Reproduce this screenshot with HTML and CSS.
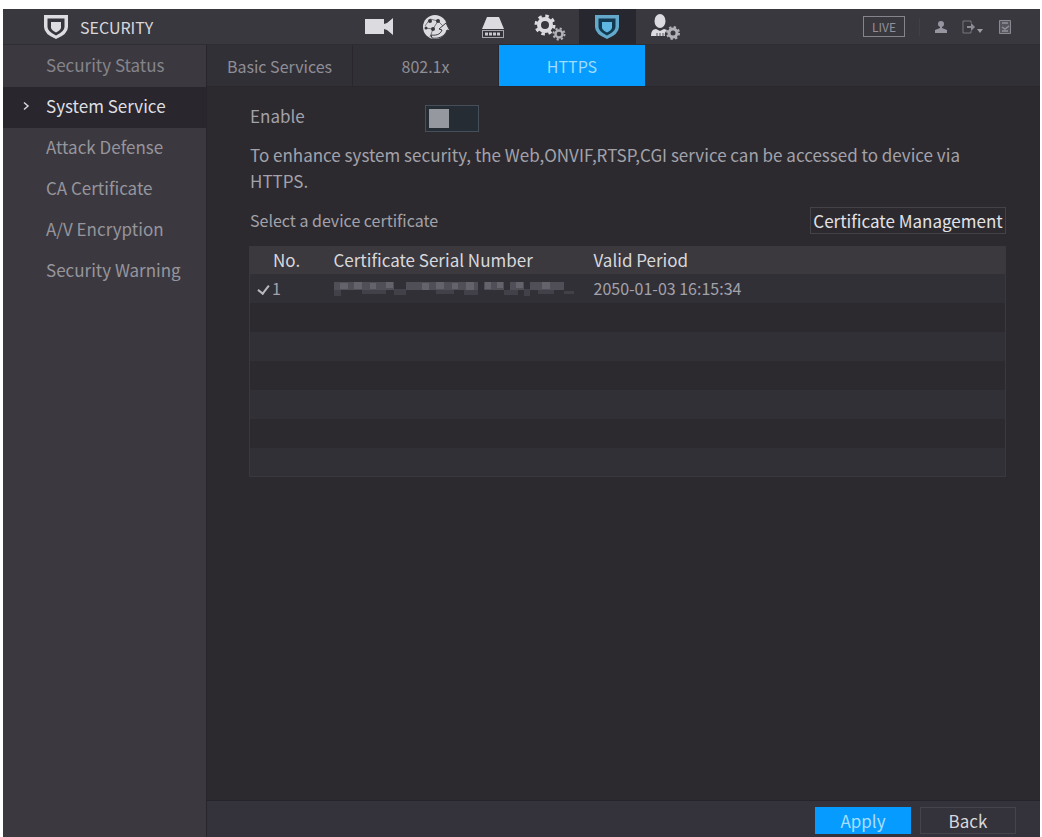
FILE: index.html
```html
<!DOCTYPE html>
<html lang="en">
<head>
<meta charset="utf-8">
<title>Security - System Service</title>
<link rel="stylesheet" href="styles.css">
</head>
<body>
<div class="app">
  <header class="topbar">
    <div class="brand">
      <svg width="26" height="26" viewBox="0 0 26 26" aria-hidden="true">
        <path d="M1 1h24v12q0 7-12 12Q1 20 1 13z" fill="#dddde1"/>
        <path d="M4.500 4.500h17v8.500q0 4.500-8.500 8.500-8.500-4-8.500-8.500z" fill="#36343c"/>
        <path d="M8 8h10v5.500q0 2.500-5 5-5-2.500-5-5z" fill="#dddde1"/>
      </svg>
      <span>SECURITY</span>
    </div>
    <nav class="modules" aria-label="Modules">
      <a href="#camera" aria-label="Camera"><svg width="30" height="26" viewBox="0 0 30 26"><path d="M1 5h19v5l3-1 6-5v17l-6-5-3-1v5H1z" fill="#dcdce0"/></svg></a>
      <a href="#network" aria-label="Network"><svg width="30" height="28" viewBox="0 0 30 28">
        <circle cx="14" cy="14" r="12" fill="#dcdce0"/>
        <g fill="none" stroke="#77757c" stroke-width="1"><path d="M9 6l8 2 5 5M4 13l5-7M4 15l8 1 5-8M12 16l-3 8"/></g>
        <g fill="#3a383f"><circle cx="9" cy="8" r="2"/><circle cx="17" cy="8" r="2"/><circle cx="5" cy="15" r="1.500"/><circle cx="12" cy="16" r="2"/></g>
        <path d="M10 22c7 1 10-2 11-5l-3-1 7-6 4 8-3-1c-2 7-9 9-15 8z" fill="#dcdce0" stroke="#3a383f"/></svg></a>
      <a href="#storage" aria-label="Storage"><svg width="26" height="26" viewBox="0 0 26 26"><path d="M7 3h12l5 12H2z" fill="#dcdce0"/><path d="M2 16h22v8H2z" fill="#a6a6ac"/><path d="M3 17h20v6H3z" fill="#333139"/><path d="M5 20h16" stroke="#c6c6cb" stroke-width="3" stroke-dasharray="3 1"/></svg></a>
      <a href="#system" aria-label="System"><svg width="32" height="28" viewBox="0 0 32 28"><g fill="none" stroke="#dcdce0"><circle cx="11" cy="12" r="6" stroke-width="4"/><circle cx="11" cy="12" r="9" stroke-width="3" stroke-dasharray="3.500 3.570"/><circle cx="25" cy="21" r="3.500" stroke-width="2.500" stroke="#b2b2b8"/><circle cx="25" cy="21" r="5.500" stroke-width="2" stroke-dasharray="2.160 2.160" stroke="#b2b2b8"/></g></svg></a>
      <a href="#security" aria-label="Security" class="current" aria-current="page"><svg width="26" height="26" viewBox="0 0 26 26"><path d="M1 1h24v12q0 7-12 12Q1 20 1 13z" fill="#62a9cc"/><path d="M4.500 4.500h17v8.500q0 4.500-8.500 8.500-8.500-4-8.500-8.500z" fill="#123950"/><path d="M8 8h10v5.500q0 2.500-5 5-5-2.500-5-5z" fill="#5fb6e0"/></svg></a>
      <a href="#account" aria-label="Account"><svg width="32" height="28" viewBox="0 0 32 28"><ellipse cx="12" cy="8" rx="5.500" ry="7" fill="#dcdce0"/><path d="M3 23q0-7 5-7l4 2 4-2 3 1q-3 3-2 6z" fill="#dcdce0"/><path d="M9 20v3m3-3v3m3-3v3" stroke="#55535a"/><g fill="none" stroke="#b2b2b8"><circle cx="25" cy="20" r="4" stroke-width="3"/><circle cx="25" cy="20" r="6" stroke-width="2" stroke-dasharray="2.350 2.360"/></g></svg></a>
    </nav>
    <div class="tools">
      <button class="live" type="button">LIVE</button>
      <span class="divider"></span>
      <button class="tool" type="button" aria-label="User"><svg width="14" height="16" viewBox="0 0 14 16"><circle cx="7" cy="5" r="3" fill="#9796a0"/><path d="M6 7h2v2l5 2v3H1v-3l5-2z" fill="#9796a0"/></svg></button>
      <button class="tool" type="button" aria-label="Log out"><svg width="22" height="16" viewBox="0 0 22 16"><path d="M9 4V2H1v12h8v-2" fill="none" stroke="#77767f"/><path d="M5 7h4V4l4 4-4 4V9H5z" fill="#8d8c95"/><path d="M15 10h6l-3 4z" fill="#9c9ba3"/></svg></button>
      <button class="tool" type="button" aria-label="QR code"><svg width="14" height="16" viewBox="0 0 14 16"><path d="M1.500 1.500h11v13h-11z" fill="#57565f" stroke="#8a8992"/><path d="M4 4h6M4 8l3 2 4-3M4 12h6" fill="none" stroke="#92919a" stroke-width="1.500"/></svg></button>
    </div>
  </header>
  <div class="body">
    <nav class="sidebar" aria-label="Security">
      <a href="#status" class="first">Security Status</a>
      <a href="#service" class="active" aria-current="page"><svg class="caret" width="7" height="10" viewBox="0 0 7 10"><path d="M1 1.500L5 5 1 8.500" fill="none" stroke="#d5d5da" stroke-width="1.500"/></svg>System Service</a>
      <a href="#attack">Attack Defense</a>
      <a href="#ca">CA Certificate</a>
      <a href="#av">A/V Encryption</a>
      <a href="#warning">Security Warning</a>
    </nav>
    <div class="content">
      <nav class="tabs" aria-label="System Service">
        <a href="#basic">Basic Services</a>
        <a href="#8021x">802.1x</a>
        <a href="#https" class="selected" aria-current="page">HTTPS</a>
      </nav>
      <main class="panel">
        <div class="enable-row">
          <label for="enable">Enable</label>
          <input id="enable" class="switch" type="checkbox" role="switch">
        </div>
        <p class="hint">To enhance system security, the Web,ONVIF,RTSP,CGI service can be accessed to device via HTTPS.</p>
        <div class="cert-row">
          <span id="cert-label">Select a device certificate</span>
          <button class="outline" type="button">Certificate Management</button>
        </div>
        <table class="certs" aria-labelledby="cert-label">
          <colgroup><col class="col-no"><col class="col-serial"><col></colgroup>
          <thead><tr><th>No.</th><th>Certificate Serial Number</th><th>Valid Period</th></tr></thead>
          <tbody>
            <tr><td><label class="pick"><input type="checkbox" checked><span>1</span></label></td>
              <td><svg class="mask" width="240" height="18" viewBox="0 0 240 18" role="img" aria-label="Hidden serial number">
                <path d="M0 3h60v8H0zM72 3h72v8H72zM150 3h20v8h-20zM176 3h14v8h-14zM196 3h34v8h-34z" fill="#504f58"/>
                <path d="M6 4h8v6H6zM20 3h8v7h-8zM36 4h6v6h-6zM52 3h7v6h-7zM88 4h7v7h-7zM102 3h8v7h-8zM118 4h6v6h-6zM132 3h8v8h-8zM151 3h6v7h-6zM163 3h6v6h-6zM182 3h7v6h-7zM208 3h8v7h-8z" fill="#64636c"/>
                <path d="M0 11h7v6H0zM28 11h24v4H28zM60 10h12v6H60zM102 11h18v4h-18zM130 11h14v5h-14zM170 11h14v5h-14zM190 10h6v7h-6zM204 11h16v4h-16zM230 12h10v3h-10z" fill="#42414a"/>
              </svg></td><td>2050-01-03 16:15:34</td></tr>
            <tr><td></td><td></td><td></td></tr>
            <tr><td></td><td></td><td></td></tr>
            <tr><td></td><td></td><td></td></tr>
            <tr><td></td><td></td><td></td></tr>
            <tr><td></td><td></td><td></td></tr>
            <tr><td></td><td></td><td></td></tr>
          </tbody>
        </table>
      </main>
      <footer class="actions">
        <button class="primary" type="button">Apply</button>
        <button class="secondary" type="button">Back</button>
      </footer>
    </div>
  </div>
</div>
</body>
</html>
```
FILE: styles.css
```css
* { box-sizing: border-box; }
body {
  margin: 0;
  padding: 9px 2px 0 3px;
  background: #fff;
  color: #a3a2aa;
  font: 16px/24px "Noto Sans CJK SC", "Noto Sans", sans-serif;
}
a { color: inherit; text-decoration: none; }
button { font: inherit; color: inherit; padding: 0; background: none; border: 0; cursor: pointer; }
svg { display: block; }

.app {
  display: flex;
  flex-direction: column;
  min-height: calc(100vh - 9px);
  background: #2c2a2f;
}
.topbar {
  display: grid;
  grid-template-columns: 1fr auto 1fr;
  height: 36px;
  background: #3a383f;
  border-bottom: 1px solid #2f2d34;
}
.brand {
  display: flex;
  align-items: center;
  gap: 11px;
  padding-left: 40px;
  color: #d8d8dc;
}
.modules { display: grid; grid-template-columns: repeat(6, 57px); }
.modules a { display: grid; place-items: center; }
.modules .current { background: #27282f; }
.tools {
  display: flex;
  justify-content: flex-end;
  align-items: center;
  gap: 14px;
  padding-right: 28px;
}
.live {
  width: 42px;
  height: 21px;
  border: 1px solid #85848d;
  color: #92919a;
  font-size: 12px;
  line-height: 18px;
}
.divider { width: 1px; height: 18px; background: #424047; }

.body { display: flex; flex: 1; }
.sidebar {
  flex: 0 0 204px;
  background: #3b393f;
  border-right: 1px solid #28262c;
  color: #96959d;
  font-size: 17px;
}
.sidebar a {
  position: relative;
  display: flex;
  align-items: center;
  height: 41px;
  padding: 0 0 4px 43px;
}
.sidebar .first { height: 42px; padding-bottom: 2px; color: #85848b; }
.sidebar .active { background: #29272d; color: #dfdfe3; }
.caret { position: absolute; left: 20px; }

.content { display: flex; flex: 1; flex-direction: column; min-width: 0; }
.tabs {
  display: grid;
  grid-template-columns: repeat(3, 146px);
  height: 42px;
  background: #323037;
  border-bottom: 1px solid #29272c;
  color: #8f8e96;
}
.tabs a { display: grid; place-items: center; border-right: 1px solid #29272d; }
.tabs .selected { background: #069bff; color: #9fdcff; border: 0; }

.panel { flex: 1; padding: 14px 34px 24px 43px; }
.enable-row { display: flex; align-items: center; height: 34px; }
.enable-row label { width: 175px; padding-bottom: 4px; font-size: 17px; }
.switch {
  appearance: none;
  display: flex;
  width: 54px;
  height: 27px;
  margin: 0;
  padding: 3px;
  border: 1px solid #454f59;
  background: #252c33;
}
.switch::before { content: ""; width: 20px; background: #96989f; }
.switch:checked { justify-content: flex-end; background: #069bff; }
.hint { max-width: 720px; margin: 7px 0 0; font-size: 17px; line-height: 26px; }
.cert-row {
  display: flex;
  align-items: center;
  justify-content: space-between;
  margin: 13px 0 12px;
}
.cert-row span { padding-bottom: 2px; }
.outline {
  width: 196px;
  height: 27px;
  border: 1px solid #424248;
  color: #e2e2e6;
  font-size: 17px;
}

.certs {
  width: calc(100% + 1px);
  margin-left: -1px;
  table-layout: fixed;
  border-collapse: collapse;
  border: 1px solid #3a383f;
}
.col-no { width: 84px; }
.col-serial { width: 260px; }
.certs th, .certs td { padding: 0; text-align: left; font-weight: 400; }
.certs th { height: 27px; background: #3b393e; color: #d8d8dc; font-size: 17px; }
.certs th:first-child { padding-left: 23px; }
.certs td { height: 29px; }
.certs tbody tr:nth-child(odd) { background: #323037; }
.pick { display: flex; align-items: center; gap: 3px; padding-left: 7px; }
.pick input {
  appearance: none;
  display: grid;
  place-items: center;
  width: 12px;
  height: 14px;
  margin: 0;
}
.pick input:checked::before {
  content: "";
  width: 5px;
  height: 9px;
  border: solid #b9b9be;
  border-width: 0 2px 2px 0;
  transform: rotate(38deg);
}

.actions {
  display: flex;
  justify-content: flex-end;
  gap: 9px;
  height: 37px;
  padding: 6px 24px 3px;
  background: #34323a;
  border-top: 1px solid #26242a;
}
.actions button { width: 96px; height: 27px; font-size: 17px; line-height: 20px; }
.actions .primary { background: #069bff; color: #a6dfff; }
.actions .secondary { border: 1px solid #45434b; color: #d8d8dc; }
```
